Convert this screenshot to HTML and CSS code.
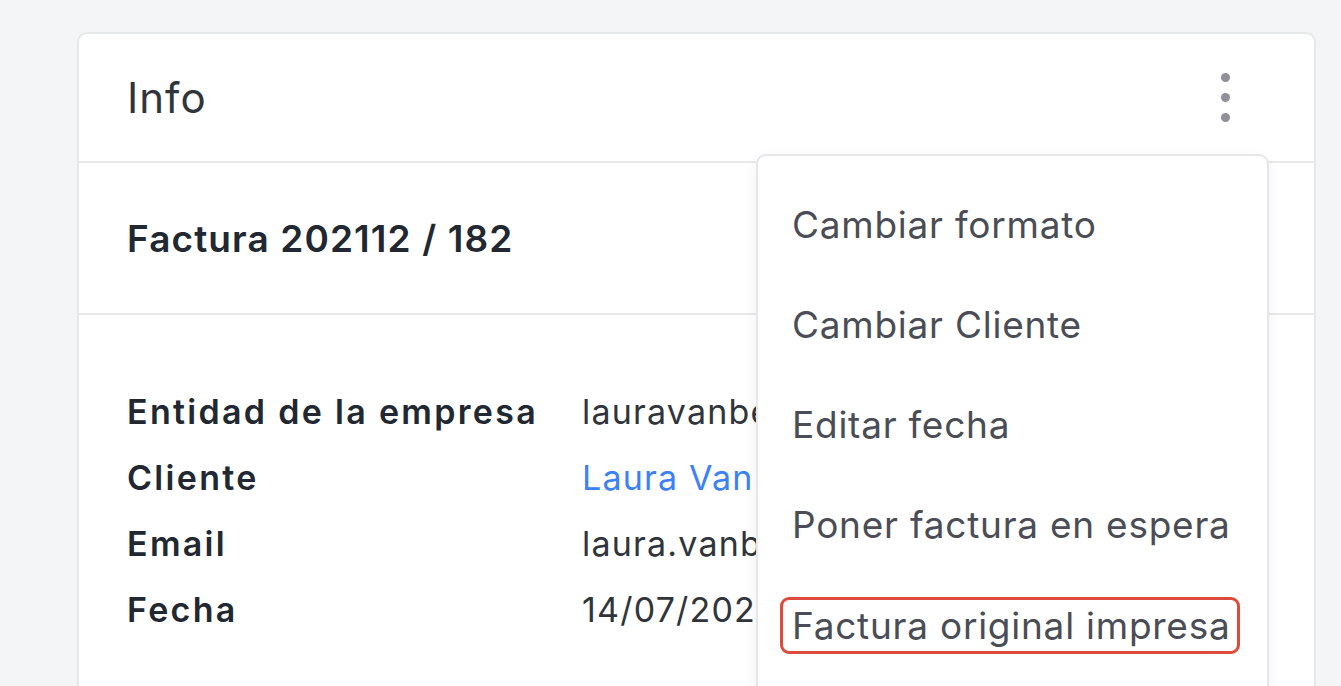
FILE: index.html
```html
<!DOCTYPE html>
<html lang="es">
<head>
  <meta charset="UTF-8">
  <meta name="viewport" content="width=device-width, initial-scale=1.0">
  <title>Info - Factura</title>
  <link rel="stylesheet" href="styles.css">
</head>
<body>
  <div class="info-card">
    <div class="card-header">
      <h2>Info</h2>
      <button class="kebab" aria-label="Más opciones">
        <span></span><span></span><span></span>
      </button>

      <ul class="dropdown">
        <li>Cambiar formato</li>
        <li>Cambiar Cliente</li>
        <li>Editar fecha</li>
        <li>Poner factura en espera</li>
        <li><span class="marked">Factura original impresa</span></li>
      </ul>
    </div>

    <div class="invoice-title">Factura 202112 / 182</div>

    <div class="details">
      <div class="label">Entidad de la empresa</div>
      <div class="value">lauravanbeek</div>
      <div class="label">Cliente</div>
      <div class="value"><a href="#">Laura Van Beek</a></div>
      <div class="label">Email</div>
      <div class="value">laura.vanbeek@gmail.com</div>
      <div class="label">Fecha</div>
      <div class="value">14/07/2021</div>
    </div>
  </div>
</body>
</html>
```

FILE: styles.css
```css
* {
  margin: 0;
  padding: 0;
  box-sizing: border-box;
}

body {
  font-family: Inter, "Noto Sans", sans-serif;
  background: #f4f5f7;
  padding: 32px 25px 0 77px;
  height: 686px;
  overflow: hidden;
  color: #222831;
}

.info-card {
  background: #fff;
  border: 2px solid #e6e7ea;
  border-radius: 10px;
  min-height: 700px;
}

.card-header {
  position: relative;
  height: 129px;
  display: flex;
  align-items: center;
  justify-content: space-between;
  padding: 0 80px 0 48px;
  border-bottom: 2px solid #e8e9ec;
}

.card-header h2 {
  font-size: 42px;
  font-weight: 400;
  color: #30343b;
  letter-spacing: 1px;
}

.kebab {
  background: none;
  border: none;
  display: flex;
  flex-direction: column;
  gap: 11px;
  padding: 4px;
  cursor: pointer;
}

.kebab span {
  width: 9px;
  height: 9px;
  border-radius: 50%;
  background: #8f9099;
}

.dropdown {
  position: absolute;
  left: 677px;
  top: 120px;
  width: 513px;
  list-style: none;
  background: #fff;
  border: 2px solid #e6e7ea;
  border-radius: 10px;
  box-shadow: 0 4px 14px rgba(0, 0, 0, 0.06);
  padding: 19px 0 40px 0;
  z-index: 2;
}

.dropdown li {
  height: 100px;
  line-height: 100px;
  padding-left: 34px;
  font-size: 37px;
  letter-spacing: 0.75px;
  color: #4a4d55;
  white-space: nowrap;
}

.marked {
  display: inline-block;
  line-height: 51px;
  padding: 0 7px 0 9px;
  margin-left: -12px;
  margin-top: -4px;
  vertical-align: middle;
  border: 3px solid #dd4b3c;
  border-radius: 9px;
}

.invoice-title {
  height: 152px;
  display: flex;
  align-items: center;
  padding-left: 48px;
  font-size: 37px;
  font-weight: 600;
  letter-spacing: 1.1px;
  color: #222831;
  border-bottom: 2px solid #e8e9ec;
}

.details {
  display: grid;
  grid-template-columns: 455px 1fr;
  padding: 64px 0 0 48px;
  font-size: 34px;
  line-height: 66px;
}

.label {
  font-weight: 600;
  letter-spacing: 2.3px;
  color: #222831;
}

.value {
  color: #30343b;
  letter-spacing: 1.2px;
  white-space: nowrap;
}

.value a {
  color: #3b82f6;
  text-decoration: none;
}
```
